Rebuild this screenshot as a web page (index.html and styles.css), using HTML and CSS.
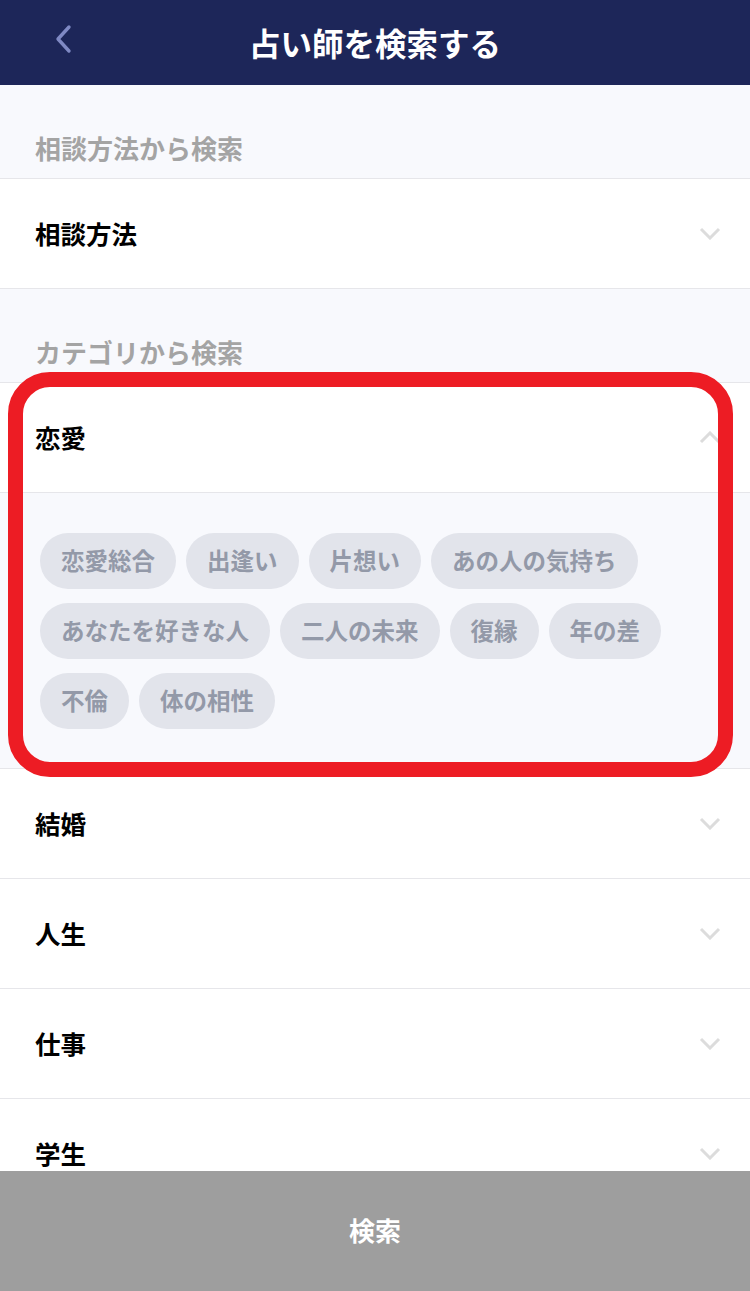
FILE: index.html
```html
<!DOCTYPE html>
<html lang="ja">
<head>
<meta charset="utf-8">
<title>占い師を検索する</title>
<link rel="stylesheet" href="styles.css">
</head>
<body>
<header class="header">
  <svg class="back" width="20" height="30" viewBox="0 0 20 30"><path d="M16 3 L5 15 L16 27" fill="none" stroke="#7f89c4" stroke-width="3.4" stroke-linecap="round" stroke-linejoin="round"/></svg>
  <h1 class="title">占い師を検索する</h1>
</header>
<main class="main">
  <div class="label">相談方法から検索</div>
  <div class="group">
    <div class="row"><span class="row-text">相談方法</span><svg class="chev" width="22" height="13" viewBox="0 0 22 13"><path d="M2 2 L11 11 L20 2" fill="none" stroke="#dcdcdc" stroke-width="3"/></svg></div>
  </div>
  <div class="label">カテゴリから検索</div>
  <div class="group">
    <div class="row"><span class="row-text">恋愛</span><svg class="chev" width="22" height="13" viewBox="0 0 22 13"><path d="M2 11 L11 2 L20 11" fill="none" stroke="#dcdcdc" stroke-width="3"/></svg></div>
    <div class="panel">
      <span class="chip">恋愛総合</span><span class="chip">出逢い</span><span class="chip">片想い</span><span class="chip">あの人の気持ち</span><span class="chip">あなたを好きな人</span><span class="chip">二人の未来</span><span class="chip">復縁</span><span class="chip">年の差</span><span class="chip">不倫</span><span class="chip">体の相性</span>
    </div>
    <div class="row"><span class="row-text">結婚</span><svg class="chev" width="22" height="13" viewBox="0 0 22 13"><path d="M2 2 L11 11 L20 2" fill="none" stroke="#dcdcdc" stroke-width="3"/></svg></div>
    <div class="row"><span class="row-text">人生</span><svg class="chev" width="22" height="13" viewBox="0 0 22 13"><path d="M2 2 L11 11 L20 2" fill="none" stroke="#dcdcdc" stroke-width="3"/></svg></div>
    <div class="row"><span class="row-text">仕事</span><svg class="chev" width="22" height="13" viewBox="0 0 22 13"><path d="M2 2 L11 11 L20 2" fill="none" stroke="#dcdcdc" stroke-width="3"/></svg></div>
    <div class="row"><span class="row-text">学生</span><svg class="chev" width="22" height="13" viewBox="0 0 22 13"><path d="M2 2 L11 11 L20 2" fill="none" stroke="#dcdcdc" stroke-width="3"/></svg></div>
  </div>
</main>
<div class="highlight"></div>
<footer class="search-btn">検索</footer>
</body>
</html>
```

FILE: styles.css
```css
* { box-sizing: border-box; }
html, body { margin: 0; padding: 0; }
body {
  width: 750px;
  height: 1291px;
  overflow: hidden;
  background: #f8f9fd;
  font-family: "Noto Sans CJK JP", "Noto Sans", sans-serif;
  position: relative;
}
.header {
  height: 85px;
  background: #1d2659;
  display: flex;
  align-items: center;
  justify-content: center;
  position: relative;
  padding-bottom: 2px;
}
.back {
  position: absolute;
  left: 53px;
  top: 24px;
}
.title {
  margin: 0;
  color: #fff;
  font-size: 31.5px;
  font-weight: 700;
  line-height: 40px;
}
.label {
  padding: 44px 35px 12px;
  font-size: 26px;
  line-height: 37px;
  font-weight: 700;
  color: #a4a4a4;
}
.group {
  border-top: 1px solid #e6e6ea;
}
.row {
  height: 110px;
  background: #fff;
  border-bottom: 1px solid #e6e6ea;
  display: flex;
  align-items: center;
  justify-content: space-between;
  padding: 0 29px 0 35px;
}
.row-text {
  font-size: 25.5px;
  font-weight: 700;
  color: #000;
  margin-bottom: 3px;
}
.panel {
  background: #f8f9fd;
  border-bottom: 1px solid #e6e6ea;
  padding: 40px 35px 39px 40px;
  display: flex;
  flex-wrap: wrap;
  gap: 14px 10px;
}
.chip {
  height: 56px;
  padding: 0 21px 2px;
  border-radius: 28px;
  background: #e2e4eb;
  color: #9399a8;
  font-size: 23.5px;
  font-weight: 700;
  display: inline-flex;
  align-items: center;
}
.highlight {
  position: absolute;
  left: 8px;
  top: 372px;
  width: 725px;
  height: 405px;
  border: 15px solid #ed1c24;
  border-radius: 42px;
}
.search-btn {
  position: absolute;
  left: 0;
  bottom: 0;
  width: 750px;
  height: 120px;
  background: #9e9e9e;
  color: #fff;
  font-size: 26px;
  font-weight: 700;
  display: flex;
  align-items: center;
  justify-content: center;
  padding-bottom: 4px;
}
```
